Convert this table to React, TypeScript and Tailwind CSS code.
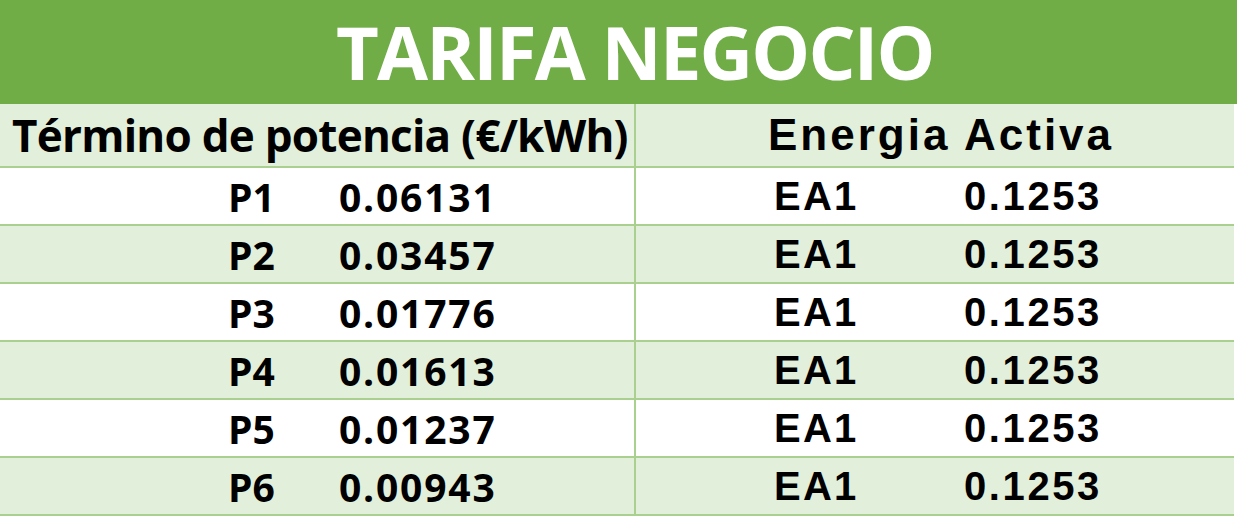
const rows = [
  { p: 'P1', pv: '0.06131', ea: 'EA1', ev: '0.1253' },
  { p: 'P2', pv: '0.03457', ea: 'EA1', ev: '0.1253' },
  { p: 'P3', pv: '0.01776', ea: 'EA1', ev: '0.1253' },
  { p: 'P4', pv: '0.01613', ea: 'EA1', ev: '0.1253' },
  { p: 'P5', pv: '0.01237', ea: 'EA1', ev: '0.1253' },
  { p: 'P6', pv: '0.00943', ea: 'EA1', ev: '0.1253' },
];

const calibri = "font-['Open_Sans',sans-serif]";
const arial = "font-['Liberation_Sans',Arial,sans-serif]";

export default function App() {
  return (
    <div className="w-[1237px] h-[516px] bg-white overflow-hidden text-black">
      <div className="h-[104px] bg-[#70ad47] flex items-center pl-[336px]">
        <h1 className={`${calibri} text-white font-bold text-[74px] leading-none tracking-[-1.8px] whitespace-nowrap`}>
          TARIFA NEGOCIO
        </h1>
      </div>

      <div className="w-[1234px]">
        <div className="h-[64px] grid grid-cols-[636px_1fr] bg-[#e2efda] border-b-2 border-[#a9d08e]">
          <div className="border-r-2 border-[#a9d08e] flex items-center pl-[12px] overflow-hidden">
            <span className={`${calibri} font-bold text-[44px] leading-none tracking-[-0.75px] whitespace-nowrap`}>
              Término de potencia (€/kWh)
            </span>
          </div>
          <div className="flex items-center pl-[132px]">
            <span className={`${arial} font-bold text-[44px] leading-none tracking-[3px] whitespace-nowrap`}>
              Energia Activa
            </span>
          </div>
        </div>

        {rows.map((r, i) => (
          <div
            key={r.p}
            className={`h-[58px] grid grid-cols-[636px_1fr] border-b-2 border-[#a9d08e] ${
              i % 2 === 0 ? 'bg-white' : 'bg-[#e2efda]'
            }`}
          >
            <div className="border-r-2 border-[#a9d08e] flex items-center pl-[228px]">
              <span className={`${calibri} font-bold text-[39px] leading-none w-[111px]`}>{r.p}</span>
              <span className={`${calibri} font-bold text-[39px] leading-none tracking-[1.8px]`}>{r.pv}</span>
            </div>
            <div className="flex items-center pl-[138px]">
              <span className={`${arial} font-bold text-[40px] leading-none tracking-[2.2px] w-[190px]`}>{r.ea}</span>
              <span className={`${arial} font-bold text-[40px] leading-none tracking-[2.6px]`}>{r.ev}</span>
            </div>
          </div>
        ))}
      </div>
    </div>
  );
}
